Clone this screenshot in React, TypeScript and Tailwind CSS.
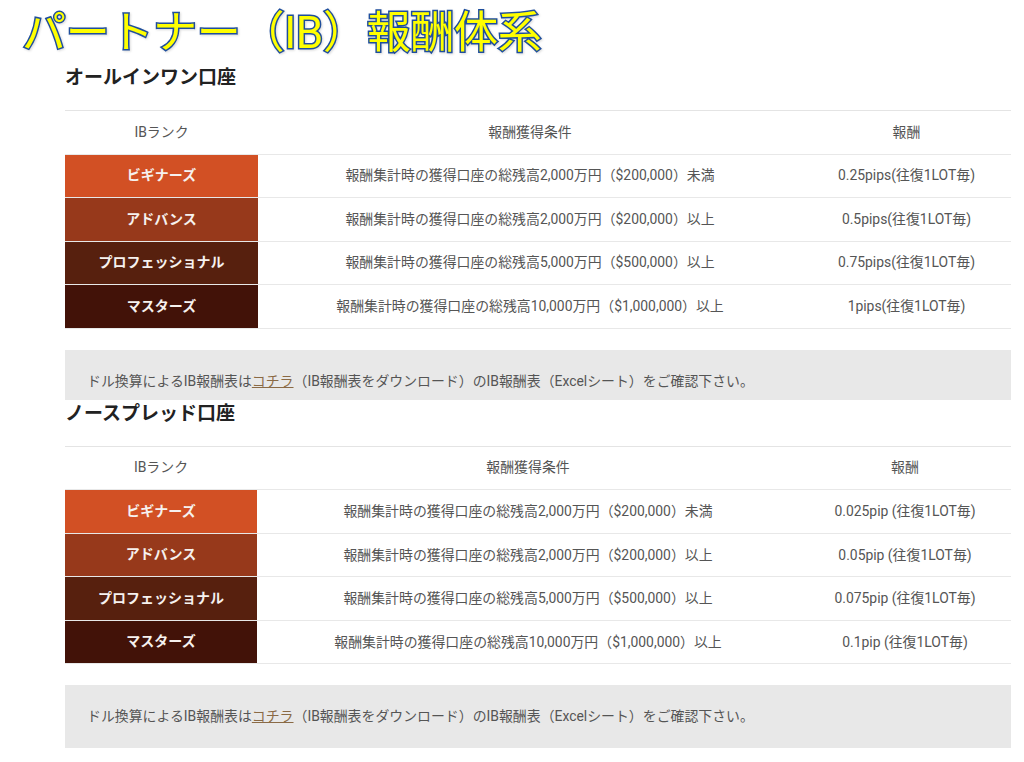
const font = "font-['Roboto','Noto_Sans_CJK_JP',sans-serif]";

type Row = { rank: string; color: string; cond: string; pay: string };

const conds = [
  "報酬集計時の獲得口座の総残高2,000万円（$200,000）未満",
  "報酬集計時の獲得口座の総残高2,000万円（$200,000）以上",
  "報酬集計時の獲得口座の総残高5,000万円（$500,000）以上",
  "報酬集計時の獲得口座の総残高10,000万円（$1,000,000）以上",
];
const ranks = [
  { rank: "ビギナーズ", color: "bg-[#d25024]" },
  { rank: "アドバンス", color: "bg-[#97391b]" },
  { rank: "プロフェッショナル", color: "bg-[#57200e]" },
  { rank: "マスターズ", color: "bg-[#421208]" },
];

const rows = (pays: string[]): Row[] =>
  ranks.map((r, i) => ({ ...r, cond: conds[i], pay: pays[i] }));

function Section(props: {
  title: string;
  rows: Row[];
  first: string;
  last: string;
  titleClass: string;
  noteClass: string;
}) {
  return (
    <section className="pl-[65px] pr-[13px]">
      <h2 className={"flex items-start text-[19px] font-bold leading-none text-[#222] " + props.titleClass}>
        {props.title}
      </h2>
      <div className="border-t border-[#e4e4e4]">
        <div className="flex h-[43.6px] items-center border-b border-[#e8e8e8] text-[13.9px] text-[#555]">
          <div className={"text-center " + props.first}>IBランク</div>
          <div className="flex-1 text-center">報酬獲得条件</div>
          <div className={"text-center " + props.last}>報酬</div>
        </div>
        {props.rows.map((r) => (
          <div key={r.rank} className="flex h-[43.5px] items-center border-b border-[#e8e8e8] text-[13.9px] text-[#555]">
            <div className={"flex h-full items-center justify-center text-[14px] font-bold text-[#f6f1ee] " + r.color + " " + props.first}>
              {r.rank}
            </div>
            <div className="flex-1 text-center">{r.cond}</div>
            <div className={"text-center " + props.last}>{r.pay}</div>
          </div>
        ))}
      </div>
      <div className={"mt-[21px] flex bg-[#e8e8e8] pl-[22px] text-[13.9px] text-[#555] " + props.noteClass}>
        <p>
          ドル換算によるIB報酬表は
          <span className="text-[#8a6a45] underline">コチラ</span>
          （IB報酬表をダウンロード）のIB報酬表（Excelシート）をご確認下さい。
        </p>
      </div>
    </section>
  );
}

export default function App() {
  return (
    <div className={"h-[762px] w-[1024px] overflow-hidden bg-white " + font}>
      <h1 className="flex h-[60px] items-center pl-[22px] pt-[6px] text-[44px] font-normal leading-none tracking-[-0.3px] text-[#ffff00] [-webkit-text-stroke:3px_#1f4e9c] [paint-order:stroke_fill] drop-shadow-[1px_1px_1px_rgba(0,0,0,0.15)]">
        パートナー（IB）報酬体系
      </h1>
      <Section
        title="オールインワン口座"
        titleClass="h-[50px] pt-[8px]"
        noteClass="h-[50px] items-end pb-[8px]"
        first="w-[193px]"
        last="w-[209px]"
        rows={rows(["0.25pips(往復1LOT毎)", "0.5pips(往復1LOT毎)", "0.75pips(往復1LOT毎)", "1pips(往復1LOT毎)"])}
      />
      <Section
        title="ノースプレッド口座"
        titleClass="h-[46px] pt-[4px]"
        noteClass="h-[63px] items-center"
        first="w-[192px]"
        last="w-[212px]"
        rows={rows(["0.025pip (往復1LOT毎)", "0.05pip (往復1LOT毎)", "0.075pip (往復1LOT毎)", "0.1pip (往復1LOT毎)"])}
      />
    </div>
  );
}
